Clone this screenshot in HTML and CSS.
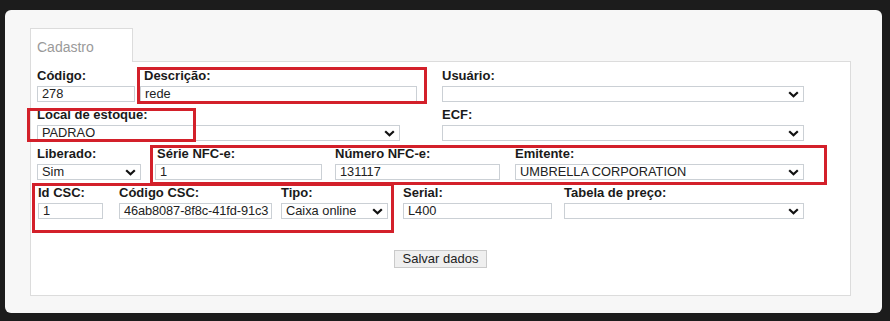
FILE: index.html
```html
<!DOCTYPE html>
<html lang="pt-BR">
<head>
<meta charset="utf-8">
<title>Cadastro</title>
<link rel="stylesheet" href="styles.css">
</head>
<body>
<div class="frame">
  <div class="tab">Cadastro</div>
  <div class="panel">
    <div class="row">
      <div class="field w-codigo"><div class="lbl">Código:</div><div class="input">278</div></div>
      <div class="field w-desc"><div class="lbl">Descrição:</div><div class="input">rede</div></div>
      <div class="field w-usuario"><div class="lbl">Usuário:</div><div class="input select"><span></span><svg class="chev" width="11" height="7" viewBox="0 0 11 7"><path d="M1.2 1.2 L5.5 5.3 L9.8 1.2" fill="none" stroke="#111" stroke-width="2.2"/></svg></div></div>
    </div>
    <div class="row">
      <div class="field w-local"><div class="lbl">Local de estoque:</div><div class="input select"><span>PADRAO</span><svg class="chev" width="11" height="7" viewBox="0 0 11 7"><path d="M1.2 1.2 L5.5 5.3 L9.8 1.2" fill="none" stroke="#111" stroke-width="2.2"/></svg></div></div>
      <div class="field w-ecf"><div class="lbl">ECF:</div><div class="input select"><span></span><svg class="chev" width="11" height="7" viewBox="0 0 11 7"><path d="M1.2 1.2 L5.5 5.3 L9.8 1.2" fill="none" stroke="#111" stroke-width="2.2"/></svg></div></div>
    </div>
    <div class="row">
      <div class="field w-lib"><div class="lbl">Liberado:</div><div class="input select"><span>Sim</span><svg class="chev" width="11" height="7" viewBox="0 0 11 7"><path d="M1.2 1.2 L5.5 5.3 L9.8 1.2" fill="none" stroke="#111" stroke-width="2.2"/></svg></div></div>
      <div class="field w-serie"><div class="lbl">Série NFC-e:</div><div class="input">1</div></div>
      <div class="field w-numero"><div class="lbl">Número NFC-e:</div><div class="input">131117</div></div>
      <div class="field w-emit"><div class="lbl">Emitente:</div><div class="input select"><span>UMBRELLA CORPORATION</span><svg class="chev" width="11" height="7" viewBox="0 0 11 7"><path d="M1.2 1.2 L5.5 5.3 L9.8 1.2" fill="none" stroke="#111" stroke-width="2.2"/></svg></div></div>
    </div>
    <div class="row">
      <div class="field w-idcsc"><div class="lbl">Id CSC:</div><div class="input">1</div></div>
      <div class="field w-codcsc"><div class="lbl">Código CSC:</div><div class="input csc">46ab8087-8f8c-41fd-91c3</div></div>
      <div class="field w-tipo"><div class="lbl">Tipo:</div><div class="input select"><span>Caixa online</span><svg class="chev" width="11" height="7" viewBox="0 0 11 7"><path d="M1.2 1.2 L5.5 5.3 L9.8 1.2" fill="none" stroke="#111" stroke-width="2.2"/></svg></div></div>
      <div class="field w-serial"><div class="lbl">Serial:</div><div class="input">L400</div></div>
      <div class="field w-tabela"><div class="lbl">Tabela de preço:</div><div class="input select"><span></span><svg class="chev" width="11" height="7" viewBox="0 0 11 7"><path d="M1.2 1.2 L5.5 5.3 L9.8 1.2" fill="none" stroke="#111" stroke-width="2.2"/></svg></div></div>
    </div>
    <div class="actions"><button class="btn" type="button">Salvar dados</button></div>
  </div>
</div>
<div class="ann ann-desc"></div>
<div class="ann ann-local"></div>
<div class="ann ann-nfce"></div>
<div class="ann ann-csc"></div>
</body>
</html>
```

FILE: styles.css
```css
* { box-sizing: border-box; }
html, body { margin: 0; padding: 0; }
body {
  width: 890px;
  height: 321px;
  overflow: hidden;
  background: #1c1c1c;
  font-family: "Liberation Sans", Arial, sans-serif;
  color: #1a1a1a;
  padding: 10px 8px 8px 5px;
  position: relative;
}
.frame {
  width: 877px;
  height: 303px;
  background: #f7f7f7;
  border-radius: 6px;
  padding: 18px 0 0 25px;
}
.tab {
  width: 103px;
  height: 34px;
  background: #fff;
  border: 1px solid #dcdcdc;
  border-bottom: none;
  margin-bottom: -1px;
  position: relative;
  z-index: 1;
  color: #9a9a9a;
  font-size: 14px;
  padding: 10px 0 0 6px;
}
.panel {
  width: 821px;
  height: 235px;
  background: #fff;
  border: 1px solid #dcdcdc;
  padding: 6px 0 0 6px;
}
.row {
  display: flex;
  margin-bottom: 5px;
}
.field { flex: none; }
.lbl {
  font-weight: bold;
  font-size: 13px;
  line-height: 16px;
  height: 16px;
  margin-bottom: 2px;
  white-space: nowrap;
}
.input {
  height: 16px;
  border: 1px solid #cbd0d5;
  background: #fff;
  font-size: 12.8px;
  line-height: 14px;
  padding: 0 4px;
  white-space: nowrap;
  overflow: hidden;
  color: #222;
}
.csc { padding-right: 0; letter-spacing: -0.1px; }
.select {
  display: flex;
  justify-content: space-between;
  align-items: center;
  padding-right: 4px;
}
.select span { overflow: hidden; }
.chev { flex: none; }

.w-codigo { width: 98px; }
.w-desc { width: 277px; margin-left: 5px; }
.w-usuario { width: 362px; margin-left: 25px; }
.w-local { width: 363px; }
.w-ecf { width: 362px; margin-left: 42px; }
.w-lib { width: 104px; }
.w-serie { width: 167px; margin-left: 14px; }
.w-numero { width: 165px; margin-left: 13px; }
.w-emit { width: 289px; margin-left: 15px; }
.w-idcsc { width: 65px; margin-left: 1px; }
.w-codcsc { width: 153px; margin-left: 16px; }
.w-tipo { width: 107px; margin-left: 9px; }
.w-serial { width: 149px; margin-left: 15px; }
.w-tabela { width: 240px; margin-left: 12px; }

.w-desc .lbl { padding-left: 4px; }
.w-serie .lbl { padding-left: 2px; }

.actions {
  display: flex;
  justify-content: center;
  padding-top: 26px;
  padding-right: 6px;
}
.btn {
  width: 93px;
  height: 18px;
  background: #efefef;
  border: 1px solid #cacaca;
  border-radius: 0;
  font-family: "Liberation Sans", Arial, sans-serif;
  font-size: 13px;
  line-height: 14px;
  color: #222;
  padding: 0;
}

.ann {
  position: absolute;
  border: 3px solid #d3202a;
  pointer-events: none;
}
.ann-desc { left: 137px; top: 67px; width: 290px; height: 37px; }
.ann-local { left: 27px; top: 108px; width: 169px; height: 34px; }
.ann-nfce { left: 150px; top: 145px; width: 677px; height: 40px; }
.ann-csc { left: 32px; top: 183px; width: 362px; height: 50px; }
```
